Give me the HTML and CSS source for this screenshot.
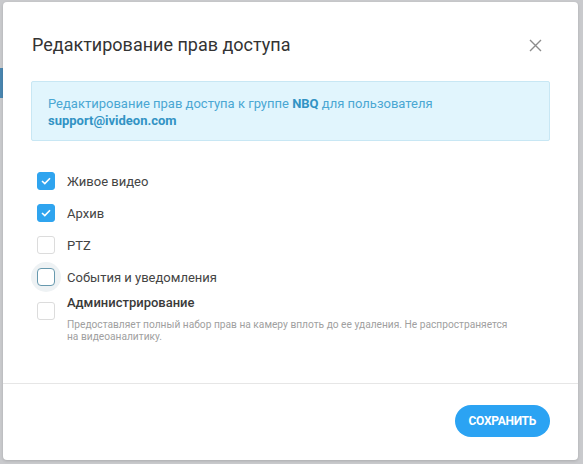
FILE: index.html
```html
<!DOCTYPE html>
<html lang="ru">
<head>
    <meta charset="UTF-8">
    <meta name="viewport" content="width=device-width, initial-scale=1.0">
    <title>Редактирование прав доступа</title>
    <link rel="stylesheet" href="styles.css">
</head>
<body>
    <div class="backdrop">
        <div class="page-strip"></div>
    </div>

    <div class="modal">
        <div class="modal-header">
            <h2 class="modal-title">Редактирование прав доступа</h2>
            <button class="close" type="button" aria-label="Закрыть">
                <svg width="13" height="13" viewBox="0 0 13 13">
                    <path d="M1 1 L12 12 M12 1 L1 12" stroke="#8c8c8c" stroke-width="1.4" fill="none"/>
                </svg>
            </button>
        </div>

        <div class="modal-body">
            <div class="info">
                Редактирование прав доступа к группе <b>NBQ</b> для пользователя <b>support@ivideon.com</b>
            </div>

            <ul class="perms">
                <li class="perm">
                    <span class="box checked">
                        <svg width="10" height="8" viewBox="0 0 10 8"><path d="M1 4 L3.8 6.6 L9 1.2" stroke="#fff" stroke-width="1.6" fill="none"/></svg>
                    </span>
                    <span class="perm-label">Живое видео</span>
                </li>
                <li class="perm">
                    <span class="box checked">
                        <svg width="10" height="8" viewBox="0 0 10 8"><path d="M1 4 L3.8 6.6 L9 1.2" stroke="#fff" stroke-width="1.6" fill="none"/></svg>
                    </span>
                    <span class="perm-label">Архив</span>
                </li>
                <li class="perm">
                    <span class="box"></span>
                    <span class="perm-label">PTZ</span>
                </li>
                <li class="perm">
                    <span class="box focused"></span>
                    <span class="perm-label">События и уведомления</span>
                </li>
                <li class="perm perm-admin">
                    <span class="box"></span>
                    <div class="perm-text">
                        <div class="perm-title">Администрирование</div>
                        <div class="perm-desc">Предоставляет полный набор прав на камеру вплоть до ее удаления. Не распространяется на видеоаналитику.</div>
                    </div>
                </li>
            </ul>
        </div>

        <div class="modal-footer">
            <button class="save" type="button">СОХРАНИТЬ</button>
        </div>
    </div>
</body>
</html>
```

FILE: styles.css
```css
body {
    margin: 0;
    padding: 0;
    font-family: Roboto, "Liberation Sans", Arial, sans-serif;
    background-color: #c9cacd;
    width: 583px;
    height: 464px;
    overflow: hidden;
    position: relative;
}

.backdrop {
    height: 464px;
}

.page-strip {
    position: absolute;
    left: 0;
    top: 68px;
    width: 4px;
    height: 30px;
    background-color: #4a86b0;
}

.modal {
    position: absolute;
    z-index: 1;
    left: 3px;
    top: 2px;
    width: 575px;
    height: 458px;
    background-color: #fff;
    border-radius: 4px;
    box-shadow: 0 1px 3px rgba(0, 0, 0, 0.15);
    display: flex;
    flex-direction: column;
}

.modal-header {
    display: flex;
    align-items: center;
    justify-content: space-between;
    padding: 31px 36px 0 29px;
    height: 24px;
    margin-bottom: 24px;
}

.modal-title {
    margin: 0;
    font-size: 18px;
    line-height: 24px;
    font-weight: 400;
    color: #333;
}

.close {
    border: none;
    background: none;
    padding: 0;
    width: 13px;
    height: 13px;
    display: flex;
    cursor: pointer;
}

.modal-body {
    padding: 0 28px;
    flex: 1;
}

.info {
    background-color: #e1f5fd;
    border: 1px solid #c8e7f4;
    border-radius: 2px;
    padding: 13px 16px 11px;
    font-size: 13px;
    line-height: 17px;
    color: #4aa7d3;
}

.info b {
    color: #3293c4;
    font-weight: 700;
}

.perms {
    list-style: none;
    margin: 24px 0 0;
    padding: 0;
}

.perm {
    display: flex;
    align-items: center;
    height: 32px;
    padding-left: 6px;
}

.box {
    width: 16px;
    height: 16px;
    border: 1px solid #dcdcdc;
    border-radius: 3px;
    background-color: #fff;
    display: flex;
    align-items: center;
    justify-content: center;
    flex-shrink: 0;
    position: relative;
}

.box.checked {
    background-color: #2fa4ef;
    border-color: #2fa4ef;
}

.box.focused {
    border-color: #6799ae;
    border-radius: 4px;
}

.box.focused::before {
    content: "";
    position: absolute;
    left: -7px;
    top: -7px;
    width: 30px;
    height: 30px;
    border-radius: 50%;
    background-color: #eef2f4;
    z-index: -1;
}

.perm-label {
    margin-left: 12px;
    font-size: 13px;
    color: #444;
}

.perm-admin {
    height: auto;
    align-items: flex-start;
    padding-top: 1px;
}

.perm-admin .box {
    margin-top: 8px;
}

.perm-text {
    margin-left: 12px;
}

.perm-title {
    font-size: 13px;
    line-height: 18px;
    font-weight: 500;
    color: #3a3a3a;
}

.perm-desc {
    margin-top: 7px;
    font-size: 10.2px;
    line-height: 12px;
    color: #a0a0a0;
    max-width: 450px;
}

.modal-footer {
    border-top: 1px solid #e6e6e6;
    padding: 21px 28px 23px;
    display: flex;
    justify-content: flex-end;
}

.save {
    height: 32px;
    padding: 0 14px;
    border: none;
    border-radius: 16px;
    background-color: #2ba3f3;
    color: #fff;
    font-family: Roboto, "Liberation Sans", Arial, sans-serif;
    font-size: 12px;
    font-weight: 700;
    letter-spacing: -0.3px;
    cursor: pointer;
}
```
